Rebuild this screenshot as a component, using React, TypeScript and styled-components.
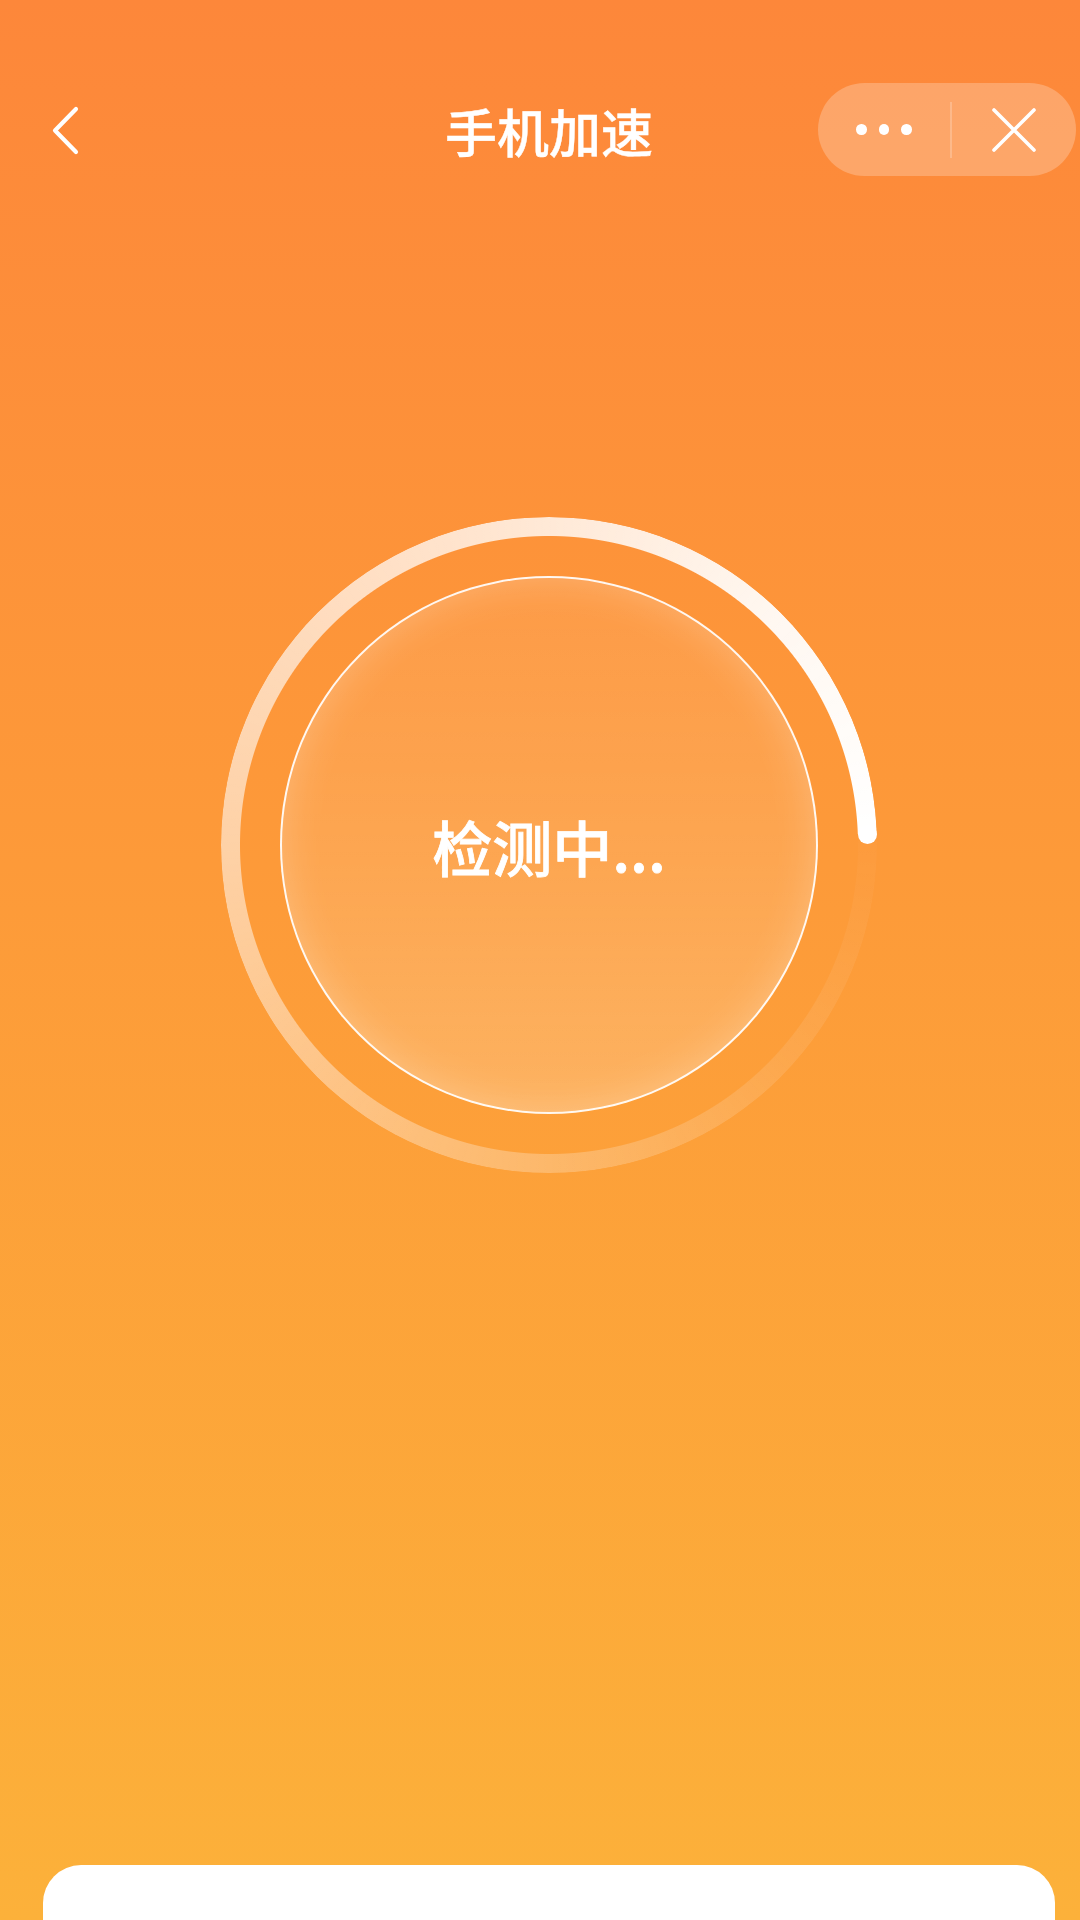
import React from "react";
import styled, { createGlobalStyle } from "styled-components";

const Global = createGlobalStyle`
  html, body {
    margin: 0;
    padding: 0;
    width: 1080px;
    height: 1920px;
    overflow: hidden;
    font-family: "Noto Sans CJK SC", "Noto Sans", sans-serif;
  }
  * { box-sizing: border-box; }
`;

const Page = styled.div`
  width: 1080px;
  height: 1920px;
  padding-left: 18px;
  display: flex;
  flex-direction: column;
  background: linear-gradient(180deg, #fd873a 0%, #fd9a39 45%, #fcb13a 100%);
  overflow: hidden;
`;

const StatusBar = styled.div`
  height: 83px;
  flex: none;
`;

const NavBar = styled.div`
  height: 93px;
  flex: none;
  display: grid;
  grid-template-columns: 1fr auto 1fr;
  align-items: center;
`;

const BackButton = styled.div`
  justify-self: start;
  margin-left: 33px;
  width: 30px;
  height: 50px;
  display: flex;
  align-items: center;
  justify-content: center;
`;

const Title = styled.div`
  color: #ffffff;
  font-size: 52px;
  font-weight: 500;
  -webkit-text-stroke: 0.4px #ffffff;
  line-height: 1;
  margin-top: 2px;
`;

const Capsule = styled.div`
  justify-self: end;
  margin-right: 4px;
  width: 258px;
  height: 93px;
  border-radius: 47px;
  background: rgba(255, 255, 255, 0.24);
  display: flex;
  align-items: center;
`;

const CapsuleButton = styled.div<{ $w: number }>`
  width: ${(p) => p.$w}px;
  height: 100%;
  display: flex;
  align-items: center;
  justify-content: center;
  gap: 12px;
`;

const Dot = styled.span`
  width: 10.5px;
  height: 10.5px;
  border-radius: 50%;
  background: #ffffff;
`;

const Divider = styled.div`
  width: 1.5px;
  height: 56px;
  background: rgba(255, 255, 255, 0.22);
`;

const Main = styled.div`
  flex: 1;
  display: flex;
  flex-direction: column;
  align-items: center;
  padding-top: 341px;
`;

const RingWrap = styled.div`
  position: relative;
  width: 656px;
  height: 656px;
  display: grid;
  place-items: center;
`;

const RingBand = styled.div`
  grid-area: 1 / 1;
  width: 656px;
  height: 656px;
  border-radius: 50%;
  background: conic-gradient(
    from 88deg,
    rgba(255, 255, 255, 0.02) 0%,
    rgba(255, 255, 255, 0.1) 12%,
    rgba(255, 255, 255, 0.28) 28%,
    rgba(255, 255, 255, 0.55) 50%,
    rgba(255, 255, 255, 0.76) 72%,
    rgba(255, 255, 255, 0.93) 88%,
    #ffffff 100%
  );
  -webkit-mask: radial-gradient(farthest-side, transparent calc(100% - 19.5px), #000 calc(100% - 18.5px));
  mask: radial-gradient(farthest-side, transparent calc(100% - 19.5px), #000 calc(100% - 18.5px));
`;

const RingCap = styled.span`
  position: absolute;
  left: 637px;
  top: 308px;
  width: 19px;
  height: 19px;
  border-radius: 50%;
  background: #ffffff;
`;

const Core = styled.div`
  grid-area: 1 / 1;
  width: 538px;
  height: 538px;
  border-radius: 50%;
  border: 2.5px solid rgba(255, 255, 255, 0.92);
  background: linear-gradient(
    180deg,
    rgba(255, 255, 255, 0.07) 0%,
    rgba(255, 255, 255, 0.12) 50%,
    rgba(255, 255, 255, 0.2) 100%
  );
  box-shadow: inset 0 0 40px rgba(255, 255, 255, 0.24);
  display: flex;
  align-items: center;
  justify-content: center;
`;

const Status = styled.div`
  color: #ffffff;
  font-size: 60px;
  font-weight: 500;
  -webkit-text-stroke: 0.8px #ffffff;
  line-height: 1;
  margin-top: 2px;
`;

const Card = styled.div`
  flex: none;
  height: 55px;
  margin: 0 25px;
  background: #ffffff;
  border-radius: 38px 38px 0 0;
`;

export default function App() {
  return (
    <>
      <Global />
      <Page>
        <StatusBar />
        <NavBar>
          <BackButton>
            <svg width="30" height="50" viewBox="0 0 30 50" fill="none">
              <path
                d="M25 4 L4 25.5 L25 47"
                stroke="#ffffff"
                strokeWidth="4.2"
                strokeLinecap="round"
                strokeLinejoin="round"
              />
            </svg>
          </BackButton>
          <Title>手机加速</Title>
          <Capsule>
            <CapsuleButton $w={132}>
              <Dot />
              <Dot />
              <Dot />
            </CapsuleButton>
            <Divider />
            <CapsuleButton $w={124}>
              <svg width="44" height="44" viewBox="0 0 44 44" fill="none">
                <path
                  d="M2 2 L42 42 M42 2 L2 42"
                  stroke="#ffffff"
                  strokeWidth="3.6"
                  strokeLinecap="round"
                />
              </svg>
            </CapsuleButton>
          </Capsule>
        </NavBar>
        <Main>
          <RingWrap>
            <RingBand />
            <RingCap />
            <Core>
              <Status>检测中...</Status>
            </Core>
          </RingWrap>
        </Main>
        <Card />
      </Page>
    </>
  );
}
